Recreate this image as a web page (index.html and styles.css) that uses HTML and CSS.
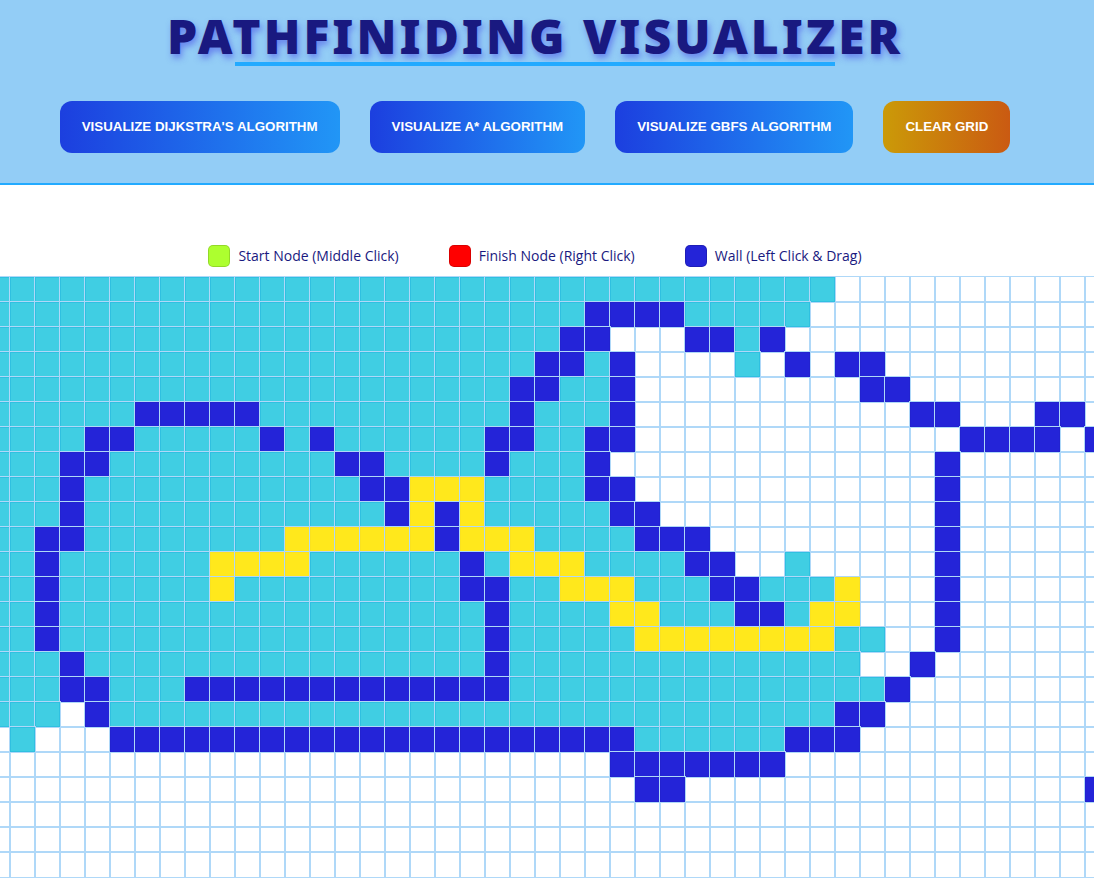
FILE: index.html
```html
<!DOCTYPE html>
<html lang="en">
<head>
<meta charset="utf-8">
<title>Pathfiniding Visualizer</title>
<link rel="stylesheet" href="styles.css">
</head>
<body>
<header class="header">
  <h1 class="title">PATHFINIDING VISUALIZER</h1>
  <div class="actions">
    <button class="btn" type="button">VISUALIZE DIJKSTRA'S ALGORITHM</button>
    <button class="btn" type="button">VISUALIZE A* ALGORITHM</button>
    <button class="btn" type="button">VISUALIZE GBFS ALGORITHM</button>
    <button class="btn btn-clear" type="button">CLEAR GRID</button>
  </div>
</header>
<main>
  <ul class="legend">
    <li class="legend-item"><span class="swatch swatch-start"></span>Start Node (Middle Click)</li>
    <li class="legend-item"><span class="swatch swatch-finish"></span>Finish Node (Right Click)</li>
    <li class="legend-item"><span class="swatch swatch-wall"></span>Wall (Left Click &amp; Drag)</li>
  </ul>
  <div class="board"><div class="grid" id="grid"></div></div>
</main>
<script src="grid.js"></script>
</body>
</html>
```
FILE: styles.css
```css
* { box-sizing: border-box; }
body {
  margin: 0;
  background: #fff;
  color: #191980;
  font-family: "Segoe UI", "Open Sans", sans-serif;
  overflow-x: hidden;
}
.header {
  display: flex;
  flex-direction: column;
  align-items: center;
  gap: 35px;
  padding: 8px 24px 30px 0;
  background: #93cdf6;
  border-bottom: 2px solid #22aaff;
}
.title {
  position: relative;
  margin: 0;
  padding-bottom: 2px;
  font-family: "Segoe UI", "Noto Sans", sans-serif;
  font-size: 48px;
  line-height: 56px;
  font-weight: 900;
  letter-spacing: 3px;
  white-space: nowrap;
  text-shadow: 2px 4px 6px rgba(60, 60, 230, 0.5);
}
.title::after {
  content: "";
  position: absolute;
  left: 50%;
  bottom: 0;
  width: 600px;
  height: 4px;
  margin-left: -300px;
  background: #22aaff;
}
.actions {
  display: flex;
  justify-content: center;
  gap: 30px;
}
.btn {
  padding: 18px 22px;
  border: 0;
  border-radius: 12px;
  background: linear-gradient(to right, #1c3fdf, #2196f6);
  color: #fff;
  font-family: "Liberation Sans", Arial, sans-serif;
  font-weight: bold;
  line-height: 16px;
  white-space: nowrap;
  cursor: pointer;
}
.btn-clear { background: linear-gradient(to right, #cb9a08, #ca5a12); }
.legend {
  display: flex;
  justify-content: center;
  gap: 50px;
  margin: 0;
  padding: 60px 24px 9px 0;
  list-style: none;
  font-size: 14px;
  line-height: 22px;
}
.legend-item {
  display: flex;
  align-items: center;
  gap: 8px;
  white-space: nowrap;
}
.swatch {
  width: 22px;
  height: 22px;
  border: 1px solid rgba(0, 0, 0, 0.15);
  border-radius: 5px;
}
.swatch-start { background: #adff2f; }
.swatch-finish { background: #ff0000; }
.swatch-wall { background: #2424d8; }
.board {
  display: flex;
  justify-content: center;
  padding: 1px 24px 1px 0;
  overflow: hidden;
}
.grid {
  flex: none;
  display: grid;
  grid-template-columns: repeat(46, 25px);
  grid-auto-rows: 25px;
}
.cell { outline: 1px solid #afd8f8; }
.visited, .wall, .path { isolation: isolate; }
.visited { background: #40cee3; border: 1px solid #2fc0e0; }
.wall { background: #2424d8; border: 1px solid #2222d0; }
.path { background: #ffe81c; border: 1px solid #fae220; }
```
FILE: grid.js
```js
// Each row lists its filled runs as type + first column - last column.
// V = visited, W = wall, P = shortest path.
const rows = [
  "V0-34",
  "V0-24 W25-28 V29-33",
  "V0-23 W24-25 W29-30 V31 W32",
  "V0-22 W23-24 V25 W26 V31 W33 W35-36",
  "V0-21 W22-23 V24-25 W26 W36-37",
  "V0-6 W7-11 V12-21 W22 V23-25 W26 W38-39 W43-44",
  "V0-4 W5-6 V7-11 W12 V13 W14 V15-20 W21-22 V23-24 W25-26 W40-43 W45",
  "V0-3 W4-5 V6-14 W15-16 V17-20 W21 V22-24 W25 W39",
  "V0-3 W4 V5-15 W16-17 P18-20 V21-24 W25-26 W39",
  "V0-3 W4 V5-16 W17 P18 W19 P20 V21-25 W26-27 W39",
  "V0-2 W3-4 V5-12 P13-18 W19 P20-22 V23-26 W27-29 W39",
  "V0-2 W3 V4-9 P10-13 V14-19 W20 V21 P22-24 V25-28 W29-30 V33 W39",
  "V0-2 W3 V4-9 P10 V11-19 W20-21 V22-23 P24-26 V27-29 W30-31 V32-34 P35 W39",
  "V0-2 W3 V4-20 W21 V22-25 P26-27 V28-30 W31-32 V33 P34-35 W39",
  "V0-2 W3 V4-20 W21 V22-26 P27-34 V35-36 W39",
  "V0-3 W4 V5-20 W21 V22-35 W38",
  "V0-3 W4-5 V6-8 W9-21 V22-36 W37",
  "V0-3 W5 V6-34 W35-36",
  "V2 W6-26 V27-32 W33-35",
  "W26-32",
  "W27-28 W45",
  "",
  "",
  ""
];
const kinds = { V: "visited", W: "wall", P: "path" };
const grid = document.getElementById("grid");

for (const row of rows) {
  const names = new Array(46).fill("cell");
  for (const run of row.split(" ").filter(Boolean)) {
    const [first, last = first] = run.slice(1).split("-").map(Number);
    for (let c = first; c <= last; c++) names[c] = "cell " + kinds[run[0]];
  }
  for (const name of names) {
    const cell = document.createElement("div");
    cell.className = name;
    grid.append(cell);
  }
}
```
